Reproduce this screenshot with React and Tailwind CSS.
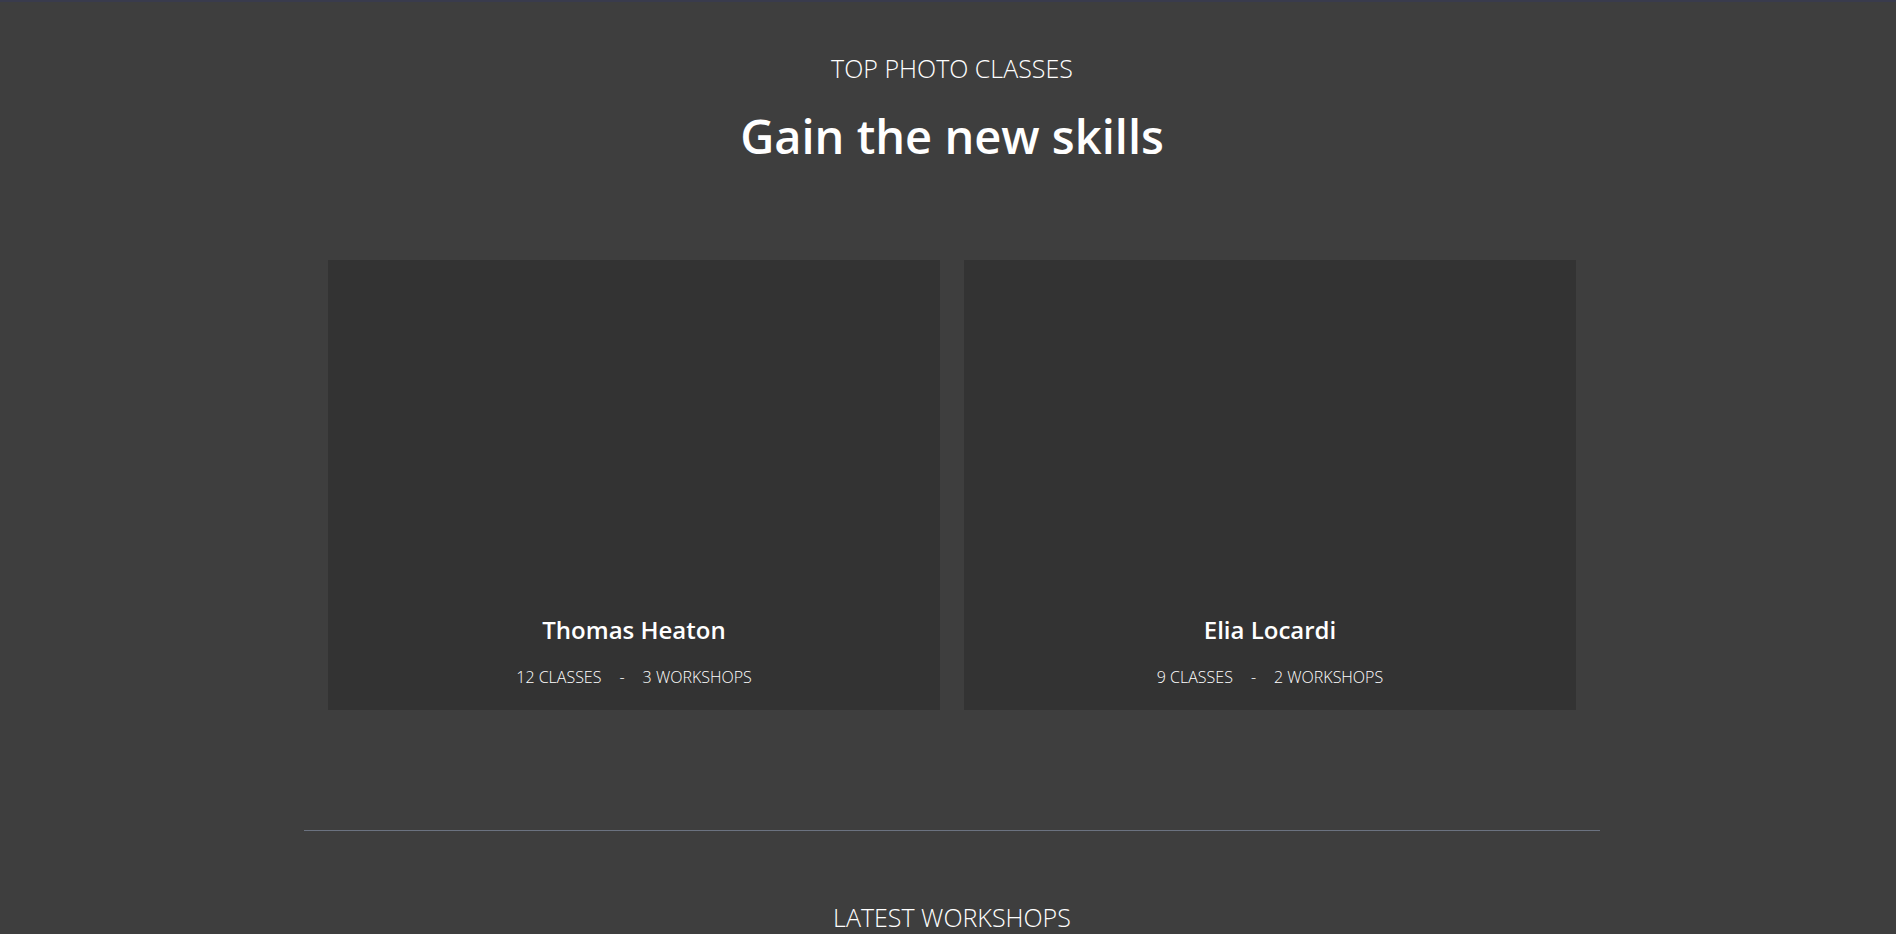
import React from "react";

const instructors = [
  { name: "Thomas Heaton", classes: 12, workshops: 3 },
  { name: "Elia Locardi", classes: 9, workshops: 2 },
];

function InstructorCard({ name, classes, workshops }) {
  return (
    <div className="h-[450px] bg-[#333333] flex flex-col items-center justify-end pb-[25px]">
      <h3 className="text-[24px] font-semibold leading-none">{name}</h3>
      <p className="mt-[27px] text-[16px] font-light leading-none flex items-center">
        <span>{classes} CLASSES</span>
        <span className="mx-[18px]">-</span>
        <span>{workshops} WORKSHOPS</span>
      </p>
    </div>
  );
}

export default function App() {
  return (
    <div className="min-h-screen bg-[#3e3e3e] border-t-2 border-[#393b4d] text-white font-['Open_Sans',sans-serif]">
      <div className="pl-2">
        <section className="w-[1296px] mx-auto">
          {/* Heading */}
          <div className="text-center pt-[54px]">
            <p className="text-[25px] font-light leading-none">TOP PHOTO CLASSES</p>
            <h2 className="mt-[32px] text-[47px] font-semibold leading-none">Gain the new skills</h2>
          </div>

          {/* Cards */}
          <div className="grid grid-cols-2 gap-6 px-6 mt-[100px]">
            {instructors.map((i) => (
              <InstructorCard key={i.name} {...i} />
            ))}
          </div>

          <hr className="mt-[120px] border-0 border-t border-[#6b7280]" />

          <div className="text-center pt-[74px] pb-10">
            <p className="text-[25px] font-light leading-none">LATEST WORKSHOPS</p>
          </div>
        </section>
      </div>
    </div>
  );
}
